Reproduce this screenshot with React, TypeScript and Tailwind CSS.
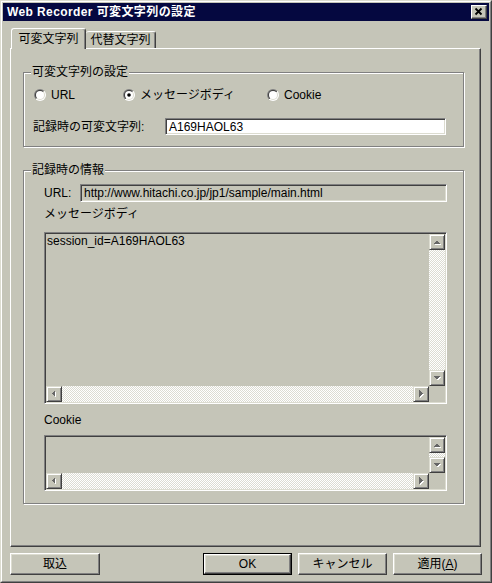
import React from 'react';

type Dir = 'up' | 'down' | 'left' | 'right';

// disabled scroll arrow: grey triangle with a white offset shadow
function Arrow({ dir }: { dir: Dir }) {
  const pts: Record<Dir, string> = {
    up: '3,9 10,9 6.5,5.5',
    down: '3,5 10,5 6.5,8.5',
    left: '8,3 8,10 4.5,6.5',
    right: '5,3 5,10 8.5,6.5',
  };
  return (
    <svg width="14" height="14" viewBox="0 0 14 14" shapeRendering="crispEdges">
      <polygon points={pts[dir]} fill="#ffffff" transform="translate(1,1)" />
      <polygon points={pts[dir]} fill="#666666" />
    </svg>
  );
}

function ScrollBtn({ dir }: { dir: Dir }) {
  return (
    <div className="w-[16px] h-[16px] shrink-0 bg-[#c5c5b8] border border-t-[#dcdcd0] border-l-[#dcdcd0] border-r-[#404040] border-b-[#404040] shadow-[inset_1px_1px_0_#fff,inset_-1px_-1px_0_#808080]">
      <Arrow dir={dir} />
    </div>
  );
}

const track = 'bg-[image:repeating-conic-gradient(#ffffff_0_25%,#dcdcd2_0_50%)] bg-size-[2px_2px]';

function ScrollBox({ height, children }: { height: string; children?: React.ReactNode }) {
  return (
    <div className={`${height} w-[403px] flex flex-col p-px border border-t-[#808080] border-l-[#808080] border-r-white border-b-white shadow-[inset_1px_1px_0_#404040,inset_-1px_-1px_0_#dcdcd0]`}>
      <div className="flex flex-1 min-h-0">
        <div className="flex-1 pl-px leading-[14px]">{children}</div>
        <div className="w-[16px] flex flex-col">
          <ScrollBtn dir="up" />
          <div className={`flex-1 ${track}`} />
          <ScrollBtn dir="down" />
        </div>
      </div>
      <div className="flex h-[16px]">
        <ScrollBtn dir="left" />
        <div className={`flex-1 ${track}`} />
        <ScrollBtn dir="right" />
        <div className="w-[16px] bg-[#c5c5b8]" />
      </div>
    </div>
  );
}

function Radio({ label, checked, width }: { label: string; checked?: boolean; width: string }) {
  return (
    <div className={`${width} flex items-center gap-[5px] h-[14px]`}>
      <svg width="12" height="12" viewBox="0 0 12 12">
        <defs>
          <linearGradient id="rdo" x1="0" y1="0" x2="1" y2="1">
            <stop offset="0.5" stopColor="#808080" />
            <stop offset="0.5" stopColor="#ffffff" />
          </linearGradient>
          <linearGradient id="rdi" x1="0" y1="0" x2="1" y2="1">
            <stop offset="0.5" stopColor="#404040" />
            <stop offset="0.5" stopColor="#dcdcd0" />
          </linearGradient>
        </defs>
        <circle cx="6" cy="6" r="6" fill="url(#rdo)" />
        <circle cx="6" cy="6" r="5" fill="url(#rdi)" />
        <circle cx="6" cy="6" r="4" fill="#ffffff" />
        {checked && <circle cx="6" cy="6" r="1.8" fill="#000000" />}
      </svg>
      <span>{label}</span>
    </div>
  );
}

function GroupBox({ title, className, children }: { title: string; className: string; children: React.ReactNode }) {
  return (
    <div className={`relative ml-[12px] w-[441px] border border-[#808080] shadow-[inset_1px_1px_0_#fff,1px_1px_0_#fff] ${className}`}>
      <span className="absolute left-[7px] -top-[8px] px-px bg-[#c5c5b8] leading-[14px]">{title}</span>
      {children}
    </div>
  );
}

function Button({ children, isDefault, width }: { children: React.ReactNode; isDefault?: boolean; width: string }) {
  const face = (
    <div className="flex-1 h-full flex items-center justify-center bg-[#c5c5b8] border border-t-white border-l-white border-r-[#404040] border-b-[#404040] shadow-[inset_-1px_-1px_0_#808080,inset_1px_1px_0_#dcdcd0]">
      {children}
    </div>
  );
  if (isDefault) {
    return <div className={`${width} h-[22px] flex border border-black`}>{face}</div>;
  }
  return <div className={`${width} h-[22px] flex`}>{face}</div>;
}

export default function App() {
  return (
    <div className="w-[492px] h-[583px] bg-[#c5c5b8] text-black text-[12px] leading-[14px] font-['Liberation_Sans','Noto_Sans_CJK_JP',sans-serif] border border-t-[#dcdcd0] border-l-[#dcdcd0] border-r-[#404040] border-b-[#404040]">
      <div className="h-full flex flex-col p-px border border-t-white border-l-white border-r-[#808080] border-b-[#808080]">
        {/* title bar */}
        <div className="h-[18px] shrink-0 flex items-center bg-[#050840] pl-[4px] pr-[2px]">
          <span className="flex-1 text-white font-bold leading-[18px] tracking-[0.4px]">Web Recorder 可変文字列の設定</span>
          <div className="w-[16px] h-[14px] bg-[#c5c5b8] border border-t-white border-l-white border-r-[#404040] border-b-[#404040] shadow-[inset_-1px_-1px_0_#808080]">
            <svg width="14" height="12" viewBox="0 0 14 12">
              <path d="M3.5 2.5 L9.5 8.5 M9.5 2.5 L3.5 8.5" stroke="#000" strokeWidth="1.8" />
            </svg>
          </div>
        </div>

        {/* tabs */}
        <div className="mt-[7px] ml-[7px] h-[20px] flex items-end pl-px">
          <div className="relative z-10 -mb-px w-[75px] h-[21px] flex items-center justify-center bg-[#c5c5b8] rounded-t-[3px] border-l border-t border-white border-r border-r-[#404040] shadow-[inset_-1px_0_0_#808080]">
            可変文字列
          </div>
          <div className="w-[70px] h-[17px] flex items-center justify-center bg-[#c5c5b8] rounded-t-[3px] border-t border-t-white border-r border-r-[#404040] shadow-[inset_-1px_0_0_#808080]">
            代替文字列
          </div>
        </div>

        {/* tab panel */}
        <div className="ml-[7px] mr-[8px] h-[499px] flex flex-col border border-t-white border-l-white border-r-[#404040] border-b-[#404040] shadow-[inset_-1px_-1px_0_#808080]">
          <GroupBox title="可変文字列の設定" className="mt-[23px] h-[75px] pt-[15px]">
            <div className="flex pl-[10px]">
              <Radio width="w-[89px]" label="URL" />
              <Radio width="w-[144px]" label="メッセージボディ" checked />
              <Radio width="w-[100px]" label="Cookie" />
            </div>
            <div className="mt-[16px] flex items-center pl-[9px]">
              <span className="w-[132px]">記録時の可変文字列:</span>
              <div className="w-[281px] h-[17px] pl-[3px] flex items-center bg-white border border-t-[#808080] border-l-[#808080] border-r-white border-b-white shadow-[inset_1px_1px_0_#404040,inset_-1px_-1px_0_#dcdcd0]">
                A169HAOL63
              </div>
            </div>
          </GroupBox>

          <GroupBox title="記録時の情報" className="mt-[23px] pt-[13px] pb-[12px] pl-[20px]">
            <div className="flex items-center h-[18px]">
              <span className="w-[36px]">URL:</span>
              <div className="w-[367px] h-[18px] pl-[3px] flex items-center border border-t-[#808080] border-l-[#808080] border-r-white border-b-white shadow-[inset_1px_1px_0_#404040,inset_-1px_-1px_0_#dcdcd0]">
                http://www.hitachi.co.jp/jp1/sample/main.html
              </div>
            </div>
            <div className="mt-[5px] h-[14px]">メッセージボディ</div>
            <div className="mt-[11px]">
              <ScrollBox height="h-[172px]">session_id=A169HAOL63</ScrollBox>
            </div>
            <div className="mt-[9px] h-[14px]">Cookie</div>
            <div className="mt-[8px]">
              <ScrollBox height="h-[56px]" />
            </div>
          </GroupBox>
        </div>

        {/* dialog buttons */}
        <div className="mt-[6px] px-[7px] flex items-center">
          <Button width="w-[90px]">取込</Button>
          <div className="flex-1" />
          <Button width="w-[89px]" isDefault>OK</Button>
          <div className="w-[6px]" />
          <Button width="w-[89px]">キャンセル</Button>
          <div className="w-[6px]" />
          <Button width="w-[89px]">
            <span>
              適用(<span className="underline">A</span>)
            </span>
          </Button>
        </div>
      </div>
    </div>
  );
}
